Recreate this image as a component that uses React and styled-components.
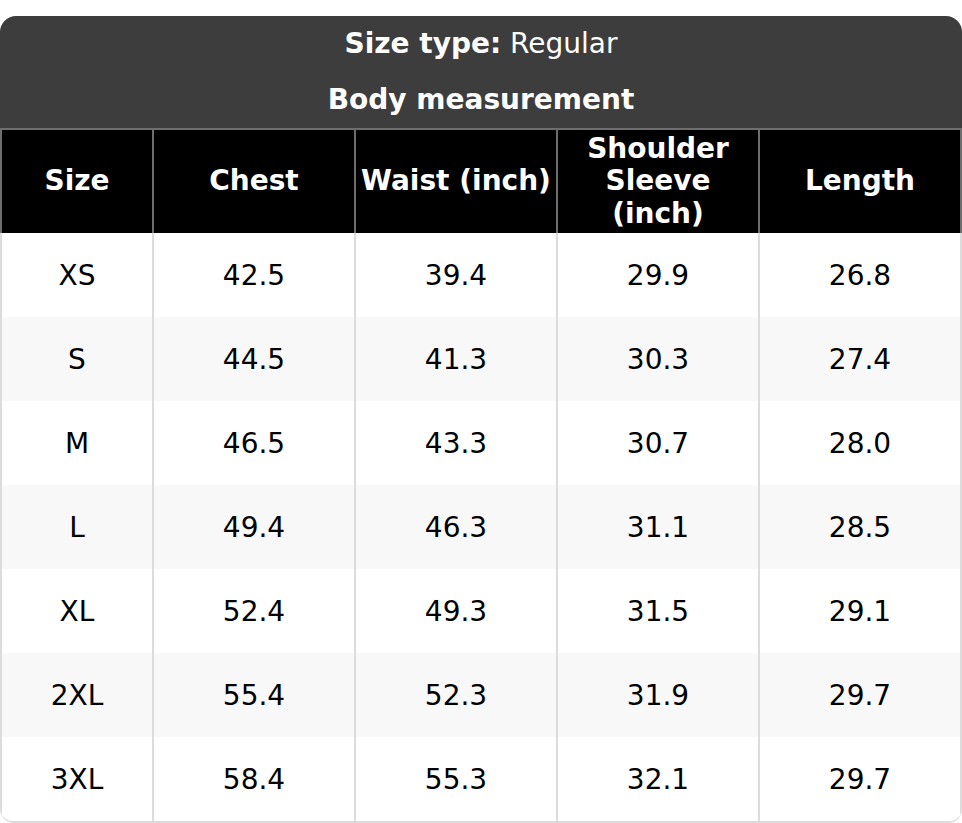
import React from "react";
import styled, { createGlobalStyle } from "styled-components";

const Global = createGlobalStyle`
  html, body { margin: 0; padding: 0; background: #fff; }
  body { font-family: "DejaVu Sans", "Liberation Sans", sans-serif; }
`;

const Card = styled.div`
  margin-top: 16px;
  border-bottom: 2px solid #dcdcdc;
  border-radius: 16px 16px 14px 14px;
  overflow: hidden;
  background: #fff;
`;

const TitleBlock = styled.div`
  background: #3d3d3d;
  color: #fff;
  text-align: center;
  font-size: 28px;
`;

const TitleLine = styled.div`
  height: 56px;
  line-height: 56px;
  font-weight: ${(p) => (p.$bold ? 700 : 400)};
`;

const Label = styled.span`
  font-weight: 700;
`;

const Table = styled.table`
  width: 100%;
  border-collapse: collapse;
  table-layout: fixed;
  font-size: 28px;
`;

const HeadCell = styled.th`
  background: #000;
  color: #fff;
  font-weight: 700;
  height: 103px;
  padding: 0 4px;
  line-height: 32.5px;
  text-align: center;
  border-left: 2px solid #6e6e6e;
  border-right: 2px solid #6e6e6e;
  border-top: 2px solid #6e6e6e;
`;

const Row = styled.tr`
  background: ${(p) => (p.$alt ? "#f8f8f8" : "#fff")};
`;

const Cell = styled.td`
  height: 84px;
  padding: 0;
  text-align: center;
  color: #000;
  border-left: 2px solid #dcdcdc;
  border-right: 2px solid #dcdcdc;
`;

const headers = ["Size", "Chest", "Waist (inch)", ["Shoulder", "Sleeve", "(inch)"], "Length"];

const rows = [
  ["XS", "42.5", "39.4", "29.9", "26.8"],
  ["S", "44.5", "41.3", "30.3", "27.4"],
  ["M", "46.5", "43.3", "30.7", "28.0"],
  ["L", "49.4", "46.3", "31.1", "28.5"],
  ["XL", "52.4", "49.3", "31.5", "29.1"],
  ["2XL", "55.4", "52.3", "31.9", "29.7"],
  ["3XL", "58.4", "55.3", "32.1", "29.7"],
];

export default function App() {
  return (
    <>
      <Global />
      <Card>
        <TitleBlock>
          <TitleLine>
            <Label>Size type:</Label> Regular
          </TitleLine>
          <TitleLine $bold>Body measurement</TitleLine>
        </TitleBlock>
        <Table>
          <colgroup>
            <col style={{ width: "152px" }} />
            <col style={{ width: "202px" }} />
            <col style={{ width: "202px" }} />
            <col style={{ width: "202px" }} />
            <col />
          </colgroup>
          <thead>
            <tr>
              {headers.map((h, i) => (
                <HeadCell key={i}>
                  {Array.isArray(h)
                    ? h.map((l, j) => (
                        <React.Fragment key={j}>
                          {l}
                          {j < h.length - 1 && <br />}
                        </React.Fragment>
                      ))
                    : h}
                </HeadCell>
              ))}
            </tr>
          </thead>
          <tbody>
            {rows.map((r, i) => (
              <Row key={i} $alt={i % 2 === 1}>
                {r.map((c, j) => (
                  <Cell key={j}>{c}</Cell>
                ))}
              </Row>
            ))}
          </tbody>
        </Table>
      </Card>
    </>
  );
}
